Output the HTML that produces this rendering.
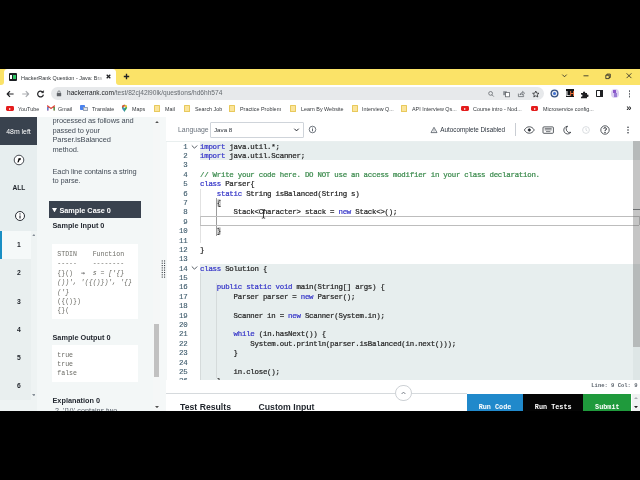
<!DOCTYPE html>
<html lang="en">
<head>
<meta charset="utf-8">
<title>HackerRank Question - Java: Braces</title>
<style>
html,body{margin:0;padding:0;background:#000;}
body{width:640px;height:480px;overflow:hidden;position:relative;font-family:"Liberation Sans",sans-serif;color:#39424e;}
#screen{position:absolute;left:0;top:69px;width:640px;height:342px;overflow:hidden;background:#fff;}
#in{position:absolute;left:0;top:-69px;width:640px;height:480px;will-change:transform;}
.a{position:absolute;white-space:nowrap;}
/* chrome */
#tabs{left:0;top:69px;width:640px;height:16px;background:#fbe368;}
#tab{left:4.2px;top:69px;width:111.4px;height:16px;background:#fff;border-radius:3.5px 3.5px 0 0;}
#tabtitle{left:21px;top:74px;font-size:6.25px;transform:scaleX(0.873);transform-origin:0 50%;color:#2f3336;width:94.3px;overflow:hidden;line-height:7px;}
#toolbar{left:0;top:85px;width:640px;height:17px;background:#fff;}
#url{left:51px;top:86.8px;width:493px;height:13px;background:#e7e9eb;border-radius:6.5px;}
#urltext{left:66.5px;top:89.4px;font-size:6.95px;line-height:8px;color:#666b70;transform:scaleX(0.95);transform-origin:0 50%;}
#urltext b{font-weight:normal;color:#202124;}
#bm{left:0;top:102px;width:640px;height:15px;background:#fff;}
.bt{font-size:6.2px;line-height:7px;top:105.1px;color:#33373b;transform:scaleX(0.873);transform-origin:0 50%;}
.fold{top:104.9px;width:6px;height:7px;background:#fbe49a;border:0.5px solid #e8c95c;box-sizing:border-box;border-radius:0.6px;}
.yt{top:106px;width:7.6px;height:5.2px;background:#e41c1c;border-radius:1.4px;}
.yt:after{content:"";position:absolute;left:3px;top:1.6px;border-top:1.2px solid transparent;border-bottom:1.2px solid transparent;border-left:2px solid #fff;}
/* page */
#nav{left:0;top:117px;width:37px;height:294px;background:#eef3f3;}
#navtop{left:0;top:145px;width:37px;height:85.6px;background:#e7eeef;}
#timer{left:0;top:117px;width:37px;height:28px;background:#39424e;color:#fff;font-size:6.9px;line-height:30.4px;text-align:center;}
#navlist{left:0;top:230.5px;width:31px;height:169.5px;background:#e9efef;}
#nav1{left:0;top:230.6px;width:31px;height:28.2px;background:#f5f9f9;}
.nn{left:0;width:38px;text-align:center;font-size:6.8px;font-weight:bold;color:#1e2229;line-height:8px;}
#left{left:37px;top:117px;width:130px;height:294px;background:#f3f7f7;}
.p{left:52.5px;font-size:7.45px;letter-spacing:-0.1px;line-height:9.8px;color:#454e59;}
.h{left:52.5px;font-size:7.3px;font-weight:bold;color:#262b33;line-height:9px;}
#scase{left:48.8px;top:201.2px;width:92.5px;height:17.3px;background:#39424e;}
.pre{left:51.5px;width:86px;background:#fff;}
.m{font-family:"Liberation Mono",monospace;}
.pt{left:57.3px;font-size:6.56px;line-height:9.375px;color:#6c6c66;white-space:pre;}
#lsb{left:153px;top:117px;width:7px;height:294px;background:#f5f7f7;}
#lthumb{left:153.8px;top:323.5px;width:5.5px;height:53px;background:#c1c1c1;}
#split{left:160.4px;top:117px;width:6.4px;height:294px;background:#f5f8f8;}
/* editor */
#ehead{left:166.4px;top:117px;width:474px;height:23.5px;background:#fff;}
#sel{left:210px;top:121.8px;width:93.5px;height:16px;border:0.5px solid #cfd4da;box-sizing:border-box;border-radius:1px;background:#fff;}
.ln{left:166px;width:21.4px;text-align:right;font-size:7.4px;letter-spacing:-0.24px;line-height:9.383px;color:#3d5a6b;}
.cl{left:200px;font-size:7.4px;letter-spacing:-0.24px;line-height:9.383px;color:#262626;white-space:pre;}
.cl{-webkit-text-stroke:0.22px;}
.ln{-webkit-text-stroke:0.12px;}
.cl i{font-style:normal;color:#3636c8;}
.cl u{text-decoration:none;color:#3a8a4c;}
.ro{left:199.7px;width:440.3px;background:#e7eeee;}
.btn{top:393.6px;height:18px;color:#fff;font-family:"Liberation Mono",monospace;font-weight:bold;font-size:6.8px;line-height:26px;text-align:center;}
</style>
</head>
<body>
<div id="screen"><div id="in">

<!-- ===== browser chrome ===== -->
<div class="a" id="tabs"></div>
<div class="a" id="tab"></div>
<div class="a" style="left:0;top:81px;width:4.2px;height:4px;background:#fff;"></div><div class="a" style="left:0;top:79px;width:4.2px;height:6px;background:#fbe368;border-radius:0 0 3px 0;"></div>
<div class="a" style="left:115.6px;top:81px;width:4px;height:4px;background:#fff;"></div><div class="a" style="left:115.6px;top:79px;width:6px;height:6px;background:#fbe368;border-radius:0 0 0 3px;"></div>
<div class="a" style="left:9px;top:73px;width:8px;height:8px;background:#1b1f23;border-radius:1px;"></div>
<div class="a" style="left:10.3px;top:75.3px;width:2.2px;height:3.4px;background:#fff;"></div>
<div class="a" style="left:13.2px;top:75.3px;width:2.4px;height:3.4px;background:#2ec866;"></div>
<div class="a" id="tabtitle">HackerRank Question - Java: Bra</div>
<div class="a" style="left:96px;top:72px;width:8px;height:11px;background:linear-gradient(90deg,rgba(255,255,255,0),#fff);"></div>
<svg class="a" style="left:105.4px;top:73.4px" width="7" height="7" viewBox="0 0 7 7"><path d="M1.7 1.7L5.3 5.3M5.3 1.7L1.7 5.3" stroke="#202124" stroke-width="1.25" fill="none"/></svg>
<svg class="a" style="left:122px;top:72.4px" width="9" height="9" viewBox="0 0 9 9"><path d="M4.5 1.8V7.2M1.8 4.5H7.2" stroke="#202124" stroke-width="1.35" fill="none"/></svg>
<svg class="a" style="left:560px;top:72px" width="76" height="9" viewBox="0 0 76 9"><g stroke="#202124" stroke-width="0.8" fill="none"><path d="M2.3 2.6L4.5 4.8L6.7 2.6"/><path d="M23.5 3.8H28.5"/><path d="M45.8 3.2H49.2V6.6H45.8ZM46.9 3.2V2.1H50.3V5.5H49.2"/><path d="M66.6 1.3L71.4 6.1M71.4 1.3L66.6 6.1"/></g></svg>

<div class="a" id="toolbar"></div>
<svg class="a" style="left:5px;top:88.5px" width="42" height="10" viewBox="0 0 42 10"><g fill="none" stroke-width="1.2" stroke-linejoin="round"><path d="M8.6 5H2.3M5 2.2L2.2 5L5 7.8" stroke="#202124"/><path d="M17.2 5H23.5M20.8 2.2L23.6 5L20.8 7.8" stroke="#a9acb0"/><path d="M37.9 3.3A2.9 2.9 0 1 0 38.4 5.6" stroke="#202124"/><path d="M38.6 1.6V3.8H36.4Z" fill="#202124" stroke="#202124" stroke-width="0.4"/></g></svg>
<div class="a" id="url"></div>
<svg class="a" style="left:56px;top:90px" width="6" height="7" viewBox="0 0 6 7"><rect x="0.8" y="2.9" width="4.4" height="3.4" rx="0.5" fill="#5f6368"/><path d="M1.8 3V2.1A1.2 1.2 0 0 1 4.2 2.1V3" stroke="#5f6368" stroke-width="0.7" fill="none"/></svg>
<div class="a" id="urltext"><b>hackerrank.com</b>/test/82cj42l90lk/questions/hd6hh574</div>
<svg class="a" style="left:486px;top:88.5px" width="56" height="10" viewBox="0 0 56 10"><g fill="none" stroke="#5f6368" stroke-width="0.75"><circle cx="4.6" cy="4.4" r="1.9"/><path d="M6 5.8L7.8 7.6"/><rect x="17.2" y="2.2" width="3.6" height="4" fill="#8a8f95" stroke="none"/><rect x="19.6" y="3.6" width="3.8" height="4.2" fill="#fff"/><path d="M32.4 4.6V7.6H37.6V6.2M34 6C34.2 4.4 35.2 3.6 36.6 3.6V2.4L38.6 4.2L36.6 6V4.8C35.4 4.8 34.6 5.2 34 6Z"/><path d="M49.8 2L50.7 4.1L53 4.3L51.3 5.8L51.8 8L49.8 6.8L47.8 8L48.3 5.8L46.6 4.3L48.9 4.1Z" stroke="#202124"/></g></svg>
<!-- extension icons -->
<svg class="a" style="left:549.7px;top:88.5px" width="9" height="9" viewBox="0 0 9 9"><circle cx="4.5" cy="4.5" r="4" fill="#35507f"/><circle cx="4.5" cy="4.5" r="2.7" fill="#e3e8f1"/><circle cx="4.5" cy="4.5" r="1.5" fill="#3d70d2"/></svg>
<div class="a" style="left:565.6px;top:89.2px;width:8.2px;height:8.2px;background:#121416;color:#fff;font-size:6.6px;font-weight:bold;line-height:9.4px;letter-spacing:-0.5px;text-indent:0.5px;overflow:hidden;">L<span style="color:#ea6f3b;">H</span></div>
<svg class="a" style="left:580px;top:89.5px" width="9" height="9" viewBox="0 0 9 9"><path d="M1 3H3.1A1.1 1.1 0 1 1 5.1 3H7V4.8A1.1 1.1 0 1 1 7 6.8V8.3H1V6.6A1 1 0 1 0 1 4.8Z" fill="#202124"/></svg>
<div class="a" style="left:596px;top:90px;width:7.2px;height:7px;border:1px solid #202124;box-sizing:border-box;border-radius:0.8px;"></div>
<div class="a" style="left:599.8px;top:90px;width:3.4px;height:7px;background:#202124;"></div>
<div class="a" style="left:610.8px;top:89.3px;width:8.4px;height:8.4px;border-radius:50%;background:#dccff1;"></div>
<div class="a" style="left:613.3px;top:90.3px;width:3px;height:3px;background:#8a55c9;"></div>
<div class="a" style="left:614px;top:93.3px;width:2.6px;height:4px;background:#9a7bd6;"></div>
<div class="a" style="left:629.3px;top:90.4px;width:1.2px;height:1.2px;border-radius:50%;background:#5a5e63;box-shadow:0 2.7px 0 #5a5e63,0 5.4px 0 #5a5e63;"></div>

<!-- bookmarks -->
<div class="a" id="bm"></div>
<div class="a yt" style="left:6.1px;"></div><div class="a bt" style="left:18px;">YouTube</div>
<svg class="a" style="left:47px;top:105px" width="8" height="6" viewBox="0 0 8 6"><path d="M0.8 5.5V1L4 3.4L7.2 1V5.5" fill="none" stroke="#e04a3f" stroke-width="1.2"/><path d="M0.8 5.5V2" stroke="#4684f0" stroke-width="1.2"/><path d="M7.2 5.5V2" stroke="#34a853" stroke-width="1.2"/></svg>
<div class="a bt" style="left:58px;">Gmail</div>
<div class="a" style="left:80px;top:104.6px;width:5px;height:5px;background:#4a82ee;border-radius:0.8px;"></div>
<div class="a" style="left:83px;top:106.5px;width:4.6px;height:4.8px;background:#dfe3ea;border-radius:0.6px;border:0.4px solid #9aa3b3;box-sizing:border-box;"></div>
<div class="a bt" style="left:91.5px;">Translate</div>
<svg class="a" style="left:121px;top:104px" width="7" height="9" viewBox="0 0 7 9"><path d="M3.5 8.3C3.5 6.6 0.9 5.4 0.9 3.3A2.6 2.6 0 0 1 6.1 3.3C6.1 5.4 3.5 6.6 3.5 8.3Z" fill="#35a853"/><path d="M3.5 0.7A2.6 2.6 0 0 1 6.1 3.3L3.5 3.3Z" fill="#f6bb2d"/><path d="M0.9 3.3A2.6 2.6 0 0 1 3.5 0.7V3.3Z" fill="#e64a3c"/><circle cx="3.5" cy="3.3" r="0.9" fill="#fff"/><path d="M3.5 8.3C3.5 7 1.6 6 1.1 4.4L3.5 3.3Z" fill="#4684f0" opacity="0.8"/></svg>
<div class="a bt" style="left:132px;">Maps</div>
<div class="a fold" style="left:154px;"></div><div class="a bt" style="left:165px;">Mail</div>
<div class="a fold" style="left:184px;"></div><div class="a bt" style="left:194.5px;">Search Job</div>
<div class="a fold" style="left:229px;"></div><div class="a bt" style="left:240px;">Practice Problem</div>
<div class="a fold" style="left:290px;"></div><div class="a bt" style="left:300.8px;">Learn By Website</div>
<div class="a fold" style="left:351.5px;"></div><div class="a bt" style="left:362px;">Interview Q...</div>
<div class="a fold" style="left:400.8px;"></div><div class="a bt" style="left:412px;">API Interview Qs...</div>
<div class="a yt" style="left:461.2px;"></div><div class="a bt" style="left:473px;">Course intro - Nod...</div>
<div class="a yt" style="left:530.8px;"></div><div class="a bt" style="left:542.5px;">Microservice config...</div>
<div class="a" style="left:626.3px;top:103.1px;font-size:9.5px;font-weight:bold;line-height:9px;color:#202124;">»</div>

<!-- ===== left nav ===== -->
<div class="a" id="nav"></div>
<div class="a" id="navtop"></div>
<div class="a" id="timer">48m left</div>
<svg class="a" style="left:13.4px;top:154.1px" width="12" height="12" viewBox="0 0 12 12"><circle cx="6" cy="6" r="4.8" fill="#fff" stroke="#2a2f36" stroke-width="0.85"/><path d="M7.8 3.9L5.5 4.2L4.4 8.4L5.8 8.3L6.4 6.3L7.6 6Z" fill="#111"/></svg>
<div class="a nn" style="top:183.8px;font-size:6.6px;">ALL</div>
<svg class="a" style="left:13.5px;top:210px" width="12" height="12" viewBox="0 0 12 12"><circle cx="6" cy="6" r="4.5" fill="#fff" stroke="#1e2229" stroke-width="0.95"/><path d="M6 5.4V8.4" stroke="#1e2229" stroke-width="1.1"/><circle cx="6" cy="3.9" r="0.7" fill="#1e2229"/></svg>
<div class="a" id="navlist"></div>
<div class="a" id="nav1"></div><div class="a" style="left:0;top:230.6px;width:1.5px;height:28.2px;background:#1a8fc4;"></div>
<div class="a nn" style="top:241.2px;">1</div>
<div class="a nn" style="top:269.3px;">2</div>
<div class="a nn" style="top:297.5px;">3</div>
<div class="a nn" style="top:325.7px;">4</div>
<div class="a nn" style="top:353.9px;">5</div>
<div class="a nn" style="top:382px;">6</div>
<svg class="a" style="left:31.5px;top:233.9px" width="3.8" height="2.3" viewBox="0 0 3.8 2.3"><polygon points="0,2.3 3.8,2.3 1.9,0" fill="#858d96"/></svg>
<svg class="a" style="left:31.5px;top:393.8px" width="3.8" height="2.3" viewBox="0 0 3.8 2.3"><polygon points="0,0 3.8,0 1.9,2.3" fill="#858d96"/></svg>

<!-- ===== problem panel ===== -->
<div class="a" id="left"></div>
<div class="a p" style="top:115.8px;">processed as follows and<br>passed to your<br>Parser.isBalanced<br>method.</div>
<div class="a p" style="top:166.6px;">Each line contains a string<br>to parse.</div>
<div class="a" id="scase"></div>
<svg class="a" style="left:52.4px;top:207.9px" width="5" height="4.5" viewBox="0 0 5 4.5"><polygon points="0,0 5,0 2.5,4.5" fill="#fff"/></svg>
<div class="a h" style="left:59.4px;top:205.6px;color:#fff;">Sample Case 0</div>
<div class="a h" style="top:220.8px;">Sample Input 0</div>
<div class="a pre" style="top:244.4px;height:75px;"></div>
<div class="a pt m" style="top:250px;">STDIN    Function
-----    --------
{}()  <span style="font-family:'DejaVu Sans Mono',monospace;font-size:6.5px;font-weight:bold;color:#666;">→</span>  <em>s = ['{}</em>
<em>())', '({()})', '{}</em>
<em>('}</em>
({()})
{}(</div>
<div class="a h" style="top:332.5px;">Sample Output 0</div>
<div class="a pre" style="top:345px;height:36.7px;"></div>
<div class="a pt m" style="top:350.6px;">true
true
false</div>
<div class="a h" style="top:395.5px;">Explanation 0</div>
<div class="a p" style="left:55px;top:405.6px;font-size:7.2px;letter-spacing:0;color:#59616b;">2. '{}()' contains two</div>
<div class="a" id="lsb"></div>
<div class="a" id="lthumb"></div>
<svg class="a" style="left:154.8px;top:120.8px" width="4" height="2.2" viewBox="0 0 4 2.2"><polygon points="0,2.2 4,2.2 2,0" fill="#505050"/></svg>
<svg class="a" style="left:154.8px;top:405.6px" width="4" height="2.2" viewBox="0 0 4 2.2"><polygon points="0,0 4,0 2,2.2" fill="#505050"/></svg>
<div class="a" id="split"></div>
<svg class="a" style="left:161px;top:260px" width="5" height="19" viewBox="0 0 5 19"><g fill="#3a3f45"><rect x="0.7" y="0.40" width="1.1" height="1.1"/><rect x="3.0" y="0.40" width="1.1" height="1.1"/><rect x="0.7" y="2.71" width="1.1" height="1.1"/><rect x="3.0" y="2.71" width="1.1" height="1.1"/><rect x="0.7" y="5.02" width="1.1" height="1.1"/><rect x="3.0" y="5.02" width="1.1" height="1.1"/><rect x="0.7" y="7.33" width="1.1" height="1.1"/><rect x="3.0" y="7.33" width="1.1" height="1.1"/><rect x="0.7" y="9.64" width="1.1" height="1.1"/><rect x="3.0" y="9.64" width="1.1" height="1.1"/><rect x="0.7" y="11.95" width="1.1" height="1.1"/><rect x="3.0" y="11.95" width="1.1" height="1.1"/><rect x="0.7" y="14.26" width="1.1" height="1.1"/><rect x="3.0" y="14.26" width="1.1" height="1.1"/><rect x="0.7" y="16.57" width="1.1" height="1.1"/><rect x="3.0" y="16.57" width="1.1" height="1.1"/></g></svg>

<!-- ===== editor ===== -->
<div class="a" id="ehead"></div>
<div class="a" style="left:178px;top:126.1px;font-size:6.9px;line-height:8px;color:#6b737d;">Language</div>
<div class="a" id="sel"></div>
<div class="a" style="left:214px;top:126px;font-size:6.2px;line-height:8px;color:#2a3038;">Java 8</div>
<svg class="a" style="left:292.5px;top:127px" width="7" height="6" viewBox="0 0 7 6"><path d="M1.3 1.7L3.5 3.9L5.7 1.7" stroke="#20252c" stroke-width="1" fill="none"/></svg>
<svg class="a" style="left:307.5px;top:125.3px" width="9" height="9" viewBox="0 0 9 9"><circle cx="4.5" cy="4.5" r="3.3" fill="none" stroke="#39424e" stroke-width="0.7"/><path d="M4.5 4V6.3" stroke="#39424e" stroke-width="0.8"/><circle cx="4.5" cy="2.9" r="0.5" fill="#39424e"/></svg>

<svg class="a" style="left:430px;top:125.5px" width="8" height="8" viewBox="0 0 8 8"><path d="M4 1.3L7 6.6H1Z" fill="none" stroke="#39424e" stroke-width="0.7" stroke-linejoin="round"/><path d="M4 3.3V4.8" stroke="#39424e" stroke-width="0.6"/><circle cx="4" cy="5.6" r="0.35" fill="#39424e"/></svg>
<div class="a" style="left:440.3px;top:125.6px;font-size:6.3px;line-height:8px;color:#2c343e;">Autocomplete Disabled</div>
<div class="a" style="left:514.5px;top:123px;width:0.6px;height:13px;background:#c9cdd3;"></div>
<svg class="a" style="left:520px;top:123px" width="116" height="14" viewBox="0 0 116 14"><g fill="none" stroke="#20252c" stroke-width="0.75"><path d="M4.3 7C5.9 4.6 7.3 3.8 9.3 3.8C11.3 3.8 12.7 4.6 14.3 7C12.7 9.4 11.3 10.2 9.3 10.2C7.3 10.2 5.9 9.4 4.3 7Z"/><circle cx="9.3" cy="7" r="1.15" fill="#20252c"/><rect x="23" y="3.9" width="10.4" height="6.4" rx="0.9"/><path d="M24.7 5.6H31.7M24.7 6.9H31.7M26 8.6H30.4" stroke-width="0.6"/><path d="M47.6 3.2A3.9 3.9 0 1 0 50.9 9.3A3.5 3.5 0 0 1 47.6 3.2Z"/><g stroke="#cfd3d7"><circle cx="66" cy="7" r="3.4"/><path d="M66 5V7.2L67.4 8"/></g><circle cx="85" cy="7" r="4.2"/><path d="M83.7 5.8A1.35 1.35 0 1 1 85 7.3V8.2" stroke-width="0.9"/><circle cx="85" cy="9.5" r="0.35" fill="#20252c"/></g><g fill="#20252c"><circle cx="108" cy="4.2" r="0.75"/><circle cx="108" cy="7" r="0.75"/><circle cx="108" cy="9.8" r="0.75"/></g></svg>

<!-- code area -->
<div class="a" style="left:166.4px;top:140.5px;width:474px;height:1.5px;background:#e9efef;"></div>
<div class="a ro" style="top:142px;height:18.2px;"></div>
<div class="a ro" style="top:263.6px;height:120px;"></div>
<div class="a" style="left:199.6px;top:188.5px;width:0.6px;height:54px;background:#e2e2e2;"></div>
<div class="a" style="left:199.6px;top:273px;width:0.6px;height:111px;background:#d5dbdb;"></div>
<div class="a" style="left:216.4px;top:198.2px;width:0.7px;height:37.5px;background:#9c9c9c;"></div>
<div class="a" style="left:216.4px;top:282.5px;width:0.6px;height:95px;background:#d5dbdb;"></div>
<div class="a" style="left:199.7px;top:216.45px;width:439.6px;height:0.9px;background:#bdbdbd;"></div><div class="a" style="left:199.7px;top:224.6px;width:439.6px;height:0.9px;background:#bdbdbd;"></div><div class="a" style="left:199.7px;top:216.45px;width:0.8px;height:9px;background:#c6c6c6;"></div><div class="a" style="left:638.5px;top:216.45px;width:0.8px;height:9px;background:#c6c6c6;"></div>
<div class="a" style="left:217.2px;top:198.6px;width:3.8px;height:8.4px;border:0.5px solid #cfcfcf;border-radius:1px;box-sizing:border-box;"></div>
<div class="a" style="left:217.2px;top:226.8px;width:3.8px;height:8.4px;border:0.5px solid #cfcfcf;border-radius:1px;box-sizing:border-box;"></div>

<div class="a ln m" style="top:142.6px;">1<br>2<br>3<br>4<br>5<br>6<br>7<br>8<br>9<br>10<br>11<br>12<br>13<br>14<br>15<br>16<br>17<br>18<br>19<br>20<br>21<br>22<br>23<br>24<br>25<br>26</div>
<svg class="a" style="left:191px;top:143.5px" width="7" height="6" viewBox="0 0 7 6"><path d="M0.8 1.5L3.5 4.2L6.2 1.5" stroke="#424a52" stroke-width="0.9" fill="none"/></svg>
<svg class="a" style="left:191px;top:265.4px" width="7" height="6" viewBox="0 0 7 6"><path d="M0.8 1.5L3.5 4.2L6.2 1.5" stroke="#424a52" stroke-width="0.9" fill="none"/></svg>
<div class="a cl m" style="top:142.6px;"><i>import</i> java.util.*;
<i>import</i> java.util.Scanner;

<u>// Write your code here. DO NOT use an access modifier in your class declaration.</u>
<i>class</i> Parser{
    <i>static</i> String isBalanced(String s)
    {
        Stack&lt;Character&gt; stack = <i>new</i> Stack&lt;&gt;();

    }

}

<i>class</i> Solution {

    <i>public</i> <i>static</i> <i>void</i> main(String[] args) {
        Parser parser = <i>new</i> Parser();

        Scanner in = <i>new</i> Scanner(System.in);

        <i>while</i> (in.hasNext()) {
            System.out.println(parser.isBalanced(in.next()));
        }

        in.close();
    }</div>
<div class="a" style="left:633.3px;top:141px;width:6.7px;height:205.7px;background:rgba(98,98,98,0.37);"></div>
<div class="a" style="left:633.3px;top:346.7px;width:6.7px;height:33px;background:rgba(120,130,130,0.07);"></div>
<div class="a" style="left:633.3px;top:208.9px;width:6.7px;height:1px;background:#6d6f71;"></div>
<!-- mouse I-beam -->
<svg class="a" style="left:259.8px;top:209px" width="7" height="10" viewBox="0 0 7 10"><path d="M1.8 0.9H2.8Q3.5 0.9 3.5 1.6Q3.5 0.9 4.2 0.9H5.2M3.5 1.6V8.4M1.8 9.1H2.8Q3.5 9.1 3.5 8.4Q3.5 9.1 4.2 9.1H5.2" stroke="#111" stroke-width="0.8" fill="none"/></svg>

<!-- status + bottom -->
<div class="a" style="left:166.4px;top:380px;width:474px;height:31px;background:#fff;"></div>
<div class="a m" style="left:560px;top:382.4px;width:77.5px;text-align:right;font-size:5.5px;line-height:8px;font-weight:bold;color:#5b636c;">Line: 9 Col: 9</div>
<div class="a" style="left:166.4px;top:393px;width:300.4px;height:0.7px;background:#d6dadd;"></div>
<div class="a" style="left:395.2px;top:384.6px;width:16.8px;height:16.8px;border-radius:50%;background:#fff;border:0.6px solid #cdd1d5;box-sizing:border-box;"></div>
<svg class="a" style="left:400.1px;top:390px" width="7" height="6" viewBox="0 0 7 6"><path d="M1.6 4L3.5 2.1L5.4 4" stroke="#6a727c" stroke-width="0.9" fill="none"/></svg>
<div class="a h" style="left:180px;top:402.8px;font-size:8.7px;color:#1f242b;">Test Results</div>
<div class="a h" style="left:258.5px;top:402.8px;font-size:8.7px;color:#1f242b;">Custom Input</div>
<div class="a btn" style="left:466.8px;width:56.4px;background:#2089cb;">Run Code</div>
<div class="a btn" style="left:523.2px;width:60px;background:#050505;">Run Tests</div>
<div class="a btn" style="left:583.2px;width:48.3px;background:#1f9a3c;">Submit</div>
<div class="a" style="left:631.5px;top:393.6px;width:8.5px;height:18px;background:#f0f2f2;"></div>
<svg class="a" style="left:633.6px;top:397.3px" width="4" height="2" viewBox="0 0 4 2"><polygon points="0,2 4,2 2,0" fill="#a8adb2"/></svg>
<svg class="a" style="left:633.6px;top:405.8px" width="4" height="2.2" viewBox="0 0 4 2.2"><polygon points="0,0 4,0 2,2.2" fill="#222"/></svg>

</div></div>
</body>
</html>
